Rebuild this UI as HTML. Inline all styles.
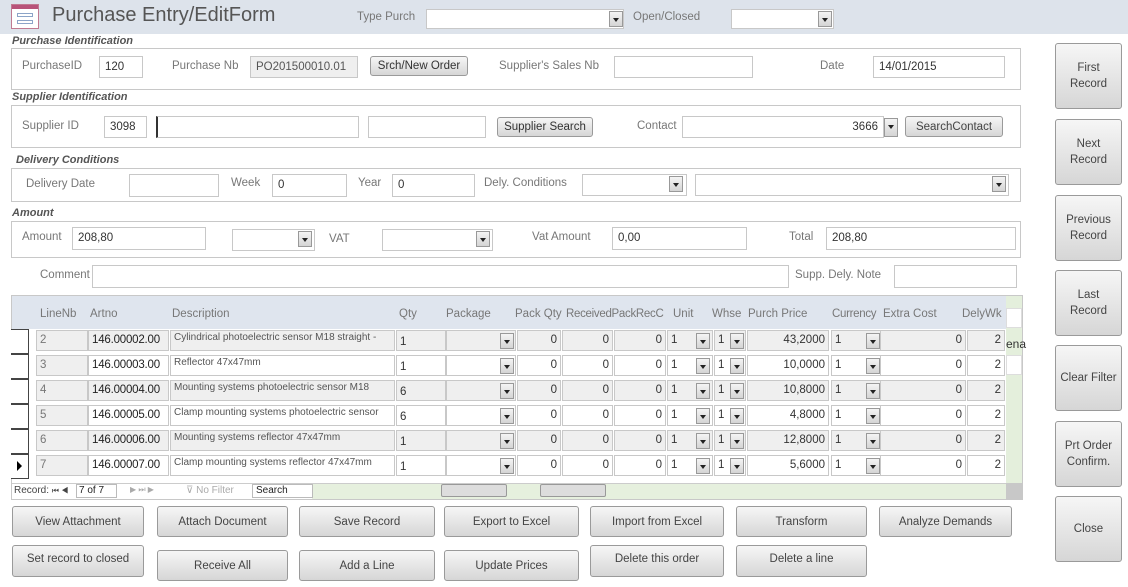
<!DOCTYPE html>
<html><head><meta charset="utf-8"><style>
*{box-sizing:border-box;margin:0;padding:0}
body{width:1128px;height:587px;background:#fff;font-family:"Liberation Sans",sans-serif;font-size:11px;color:#555;position:relative;overflow:hidden}
.a{position:absolute;white-space:nowrap}
.l{position:absolute;white-space:nowrap;color:#777;font-size:11.5px}
.i{position:absolute;border:1px solid #c8c8c8;background:#fff;color:#333;font-size:11.5px;padding:2px 5px;line-height:17px;overflow:hidden;white-space:nowrap}
.g{background:#efefef}
.d{position:absolute;width:14px;height:16px;border:1px solid #999;background:linear-gradient(#f4f4f4,#d4d4d4)}
.d:after{content:"";position:absolute;left:3px;top:6px;border-left:3px solid transparent;border-right:3px solid transparent;border-top:4px solid #222}
.b{position:absolute;border:1px solid #9a9a9a;border-radius:3px;background:linear-gradient(#f6f6f6,#e6e6e6 50%,#d6d6d6);color:#444;font-size:11.5px;text-align:center;display:flex;align-items:center;justify-content:center;line-height:16px}
.sec{position:absolute;font-weight:bold;font-style:italic;font-size:11px;color:#555}
.box{position:absolute;border:1px solid #c8c8c8}
.c{position:absolute;height:21px;border:1px solid #c8c8c8;background:#fff;font-size:11.5px;color:#333;padding:2px 3px;line-height:15px;overflow:hidden;white-space:nowrap}
.r{text-align:right}
.h{position:absolute;top:308px;color:#777;font-size:11.5px}
</style></head><body>
<div class="a" style="left:0;top:0;width:1128px;height:34px;background:#dde3eb"></div>
<div class="a" style="left:11px;top:4px;width:28px;height:25px;border:1px solid #c07a92;background:#fff"><div style="position:absolute;left:0;top:0;width:26px;height:4px;background:#b8537a"></div><div style="position:absolute;left:5px;top:8px;width:16px;height:4px;border:1px solid #8ca4c8"></div><div style="position:absolute;left:5px;top:15px;width:16px;height:4px;border:1px solid #8ca4c8"></div></div>
<div class="a" style="left:52px;top:4px;font-size:20px;color:#555">Purchase Entry/EditForm</div>
<div class="l" style="left:357px;top:11px">Type Purch</div>
<div class="i" style="left:426px;top:9px;width:198px;height:20px"></div><div class="d" style="left:609px;top:11px"></div>
<div class="l" style="left:633px;top:11px">Open/Closed</div>
<div class="i" style="left:731px;top:9px;width:103px;height:20px"></div><div class="d" style="left:818px;top:11px"></div>

<div class="sec" style="left:12px;top:35px">Purchase Identification</div>
<div class="box" style="left:11px;top:48px;width:1010px;height:42px"></div>
<div class="l" style="left:22px;top:60px">PurchaseID</div>
<div class="i" style="left:99px;top:56px;width:44px;height:22px">120</div>
<div class="l" style="left:172px;top:60px">Purchase Nb</div>
<div class="i g" style="left:250px;top:56px;width:108px;height:22px;color:#555">PO201500010.01</div>
<div class="b" style="left:370px;top:56px;width:98px;height:20px;color:#333">Srch/New Order</div>
<div class="l" style="left:499px;top:60px">Supplier's Sales Nb</div>
<div class="i" style="left:614px;top:56px;width:139px;height:22px"></div>
<div class="l" style="left:820px;top:60px">Date</div>
<div class="i" style="left:873px;top:56px;width:132px;height:22px">14/01/2015</div>

<div class="sec" style="left:12px;top:91px">Supplier Identification</div>
<div class="box" style="left:11px;top:105px;width:1010px;height:43px"></div>
<div class="l" style="left:22px;top:120px">Supplier ID</div>
<div class="i" style="left:104px;top:116px;width:43px;height:22px">3098</div>
<div class="i" style="left:156px;top:116px;width:203px;height:22px;border-left:2px solid #333"></div>
<div class="i" style="left:368px;top:116px;width:118px;height:22px"></div>
<div class="b" style="left:497px;top:117px;width:96px;height:20px;color:#333">Supplier Search</div>
<div class="l" style="left:637px;top:120px">Contact</div>
<div class="i r" style="left:682px;top:116px;width:202px;height:22px">3666</div><div class="d" style="left:884px;top:118px;height:19px"></div>
<div class="b" style="left:905px;top:116px;width:98px;height:21px">SearchContact</div>

<div class="sec" style="left:16px;top:154px">Delivery Conditions</div>
<div class="box" style="left:11px;top:168px;width:1010px;height:34px"></div>
<div class="l" style="left:26px;top:178px">Delivery Date</div>
<div class="i" style="left:129px;top:174px;width:90px;height:23px"></div>
<div class="l" style="left:231px;top:177px">Week</div>
<div class="i" style="left:272px;top:174px;width:75px;height:23px">0</div>
<div class="l" style="left:358px;top:177px">Year</div>
<div class="i" style="left:392px;top:174px;width:83px;height:23px">0</div>
<div class="l" style="left:484px;top:177px">Dely. Conditions</div>
<div class="i" style="left:582px;top:174px;width:105px;height:22px"></div><div class="d" style="left:669px;top:176px"></div>
<div class="i" style="left:695px;top:174px;width:314px;height:22px"></div><div class="d" style="left:992px;top:176px"></div>

<div class="sec" style="left:12px;top:207px">Amount</div>
<div class="box" style="left:11px;top:221px;width:1010px;height:37px"></div>
<div class="l" style="left:22px;top:231px">Amount</div>
<div class="i" style="left:72px;top:227px;width:134px;height:23px">208,80</div>
<div class="i" style="left:232px;top:229px;width:83px;height:22px"></div><div class="d" style="left:298px;top:231px"></div>
<div class="l" style="left:329px;top:233px">VAT</div>
<div class="i" style="left:382px;top:229px;width:111px;height:22px"></div><div class="d" style="left:476px;top:231px"></div>
<div class="l" style="left:532px;top:231px">Vat Amount</div>
<div class="i" style="left:612px;top:227px;width:135px;height:23px">0,00</div>
<div class="l" style="left:789px;top:231px">Total</div>
<div class="i" style="left:826px;top:227px;width:190px;height:23px">208,80</div>

<div class="l" style="left:40px;top:269px">Comment</div>
<div class="i" style="left:92px;top:265px;width:697px;height:23px"></div>
<div class="l" style="left:795px;top:269px">Supp. Dely. Note</div>
<div class="i" style="left:894px;top:265px;width:123px;height:23px"></div>

<!-- grid -->
<div class="a" style="left:11px;top:295px;width:1012px;height:205px;border:1px solid #c8c8c8;background:#fff"></div>
<div class="a" style="left:12px;top:296px;width:994px;height:33px;background:#dfe5ee"></div>
<div class="a" style="left:1006px;top:296px;width:16px;height:187px;background:#e4efdc"></div>
<div class="a" style="left:1006px;top:308px;width:16px;height:20px;background:#fff;border:1px solid #ddd"></div>
<div class="a" style="left:1006px;top:355px;width:16px;height:20px;background:#fff;border:1px solid #ddd"></div>
<div class="a" style="left:1006px;top:337px;font-size:12px;color:#333">ena</div>
<div class="h" style="left:40px">LineNb</div><div class="h" style="left:90px">Artno</div><div class="h" style="left:172px">Description</div><div class="h" style="left:399px">Qty</div><div class="h" style="left:446px">Package</div><div class="h" style="left:515px">Pack Qty</div><div class="h" style="left:566px;letter-spacing:-0.3px">ReceivedPackRecC</div><div class="h" style="left:673px">Unit</div><div class="h" style="left:712px">Whse</div><div class="h" style="left:748px">Purch Price</div><div class="h" style="left:832px;letter-spacing:-0.3px">Currency</div><div class="h" style="left:883px">Extra Cost</div><div class="h" style="left:962px">DelyWk</div>

<div id="rows"></div>
<script>
var data=[["2","146.00002.00","Cylindrical photoelectric sensor M18 straight -","1","43,2000"],["3","146.00003.00","Reflector 47x47mm","1","10,0000"],["4","146.00004.00","Mounting systems photoelectric sensor M18","6","10,8000"],["5","146.00005.00","Clamp mounting systems photoelectric sensor","6","4,8000"],["6","146.00006.00","Mounting systems reflector 47x47mm","1","12,8000"],["7","146.00007.00","Clamp mounting systems reflector 47x47mm","1","5,6000"]];
var h="";
data.forEach(function(r,k){var y=330+k*25;var g=(k%2==0)?"background:#efefef;":"";
function c(x,w,t,cls,st){h+='<div class="c '+(cls||'')+'" style="left:'+x+'px;top:'+y+'px;width:'+w+'px;'+(st||'')+'">'+t+'</div>';}
h+='<div class="a" style="left:11px;top:'+(y-1)+'px;width:18px;height:25px;border:1px solid #444;border-left:none;background:#fff"></div>';
if(k==5)h+='<div class="a" style="left:17px;top:'+(y+6)+'px;border-top:5px solid transparent;border-bottom:5px solid transparent;border-left:5px solid #000"></div>';
c(36,52,r[0],'','background:#efefef;color:#777');
c(88,81,r[1],'','font-size:11.5px;color:#222;letter-spacing:-0.2px;'+g);
c(170,225,r[2],'','font-size:10px;line-height:11px;padding-top:1px;color:#555;'+g);
c(396,50,r[3],'','padding-top:4px;'+g);
c(446,70,'','',g);h+='<div class="d" style="left:500px;top:'+(y+3)+'px"></div>';
c(517,44,'0','r',g);c(562,51,'0','r',g);c(614,52,'0','r',g);
c(667,46,'1','',g);h+='<div class="d" style="left:696px;top:'+(y+3)+'px"></div>';
c(714,32,'1','',g);h+='<div class="d" style="left:730px;top:'+(y+3)+'px"></div>';
c(747,82,r[4],'r',g);
c(831,50,'1','',g);h+='<div class="d" style="left:866px;top:'+(y+3)+'px"></div>';
c(880,86,'0','r',g);c(967,38,'2','r',g);
});
document.getElementById('rows').innerHTML=h;
</script>
<div class="a" style="left:12px;top:483px;width:994px;height:16px;background:#e6f0de;border-top:1px solid #ccc"></div>
<div class="a" style="left:12px;top:484px;width:300px;height:15px;background:#fff"></div>
<div class="a" style="left:14px;top:485px;font-size:10px;color:#444">Record: <span style="font-size:8px">⏮ ◀</span></div>
<div class="a" style="left:76px;top:484px;width:41px;height:14px;border:1px solid #bbb;font-size:10px;color:#222;padding-left:2px;line-height:12px">7 of 7</div>
<div class="a" style="left:130px;top:485px;font-size:8px;color:#aaa">▶ ⏭ ▶</div>
<div class="a" style="left:186px;top:485px;font-size:10px;color:#aaa">⊽ No Filter</div>
<div class="a" style="left:252px;top:484px;width:61px;height:14px;border:1px solid #bbb;font-size:10px;color:#222;padding-left:3px;line-height:12px;background:#fff">Search</div>
<div class="a" style="left:441px;top:484px;width:66px;height:13px;background:#ddd;border:1px solid #999;border-radius:2px"></div>
<div class="a" style="left:540px;top:484px;width:66px;height:13px;background:#ddd;border:1px solid #999;border-radius:2px"></div>
<div class="a" style="left:1006px;top:483px;width:16px;height:16px;background:#c8c8c8"></div>

<!-- bottom buttons -->
<div class="b" style="left:12px;top:506px;width:132px;height:31px">View Attachment</div>
<div class="b" style="left:157px;top:506px;width:131px;height:31px">Attach Document</div>
<div class="b" style="left:299px;top:506px;width:136px;height:31px">Save Record</div>
<div class="b" style="left:444px;top:506px;width:135px;height:31px">Export to Excel</div>
<div class="b" style="left:590px;top:506px;width:134px;height:31px">Import from Excel</div>
<div class="b" style="left:736px;top:506px;width:131px;height:31px">Transform</div>
<div class="b" style="left:879px;top:506px;width:133px;height:31px">Analyze Demands</div>
<div class="b" style="left:12px;top:545px;width:132px;height:32px;padding-bottom:4px">Set record to closed</div>
<div class="b" style="left:157px;top:550px;width:131px;height:31px">Receive All</div>
<div class="b" style="left:299px;top:550px;width:136px;height:31px">Add a Line</div>
<div class="b" style="left:444px;top:550px;width:135px;height:31px">Update Prices</div>
<div class="b" style="left:590px;top:545px;width:134px;height:32px;padding-bottom:4px">Delete this order</div>
<div class="b" style="left:736px;top:545px;width:131px;height:32px;padding-bottom:4px">Delete a line</div>

<!-- right buttons -->
<div class="b" style="left:1055px;top:43px;width:67px;height:66px">First<br>Record</div>
<div class="b" style="left:1055px;top:119px;width:67px;height:66px">Next<br>Record</div>
<div class="b" style="left:1055px;top:195px;width:67px;height:66px">Previous<br>Record</div>
<div class="b" style="left:1055px;top:270px;width:67px;height:66px;align-items:flex-start;padding-top:16px">Last<br>Record</div>
<div class="b" style="left:1055px;top:345px;width:67px;height:66px">Clear Filter</div>
<div class="b" style="left:1055px;top:421px;width:67px;height:66px">Prt Order<br>Confirm.</div>
<div class="b" style="left:1055px;top:496px;width:67px;height:66px">Close</div>
</body></html>
